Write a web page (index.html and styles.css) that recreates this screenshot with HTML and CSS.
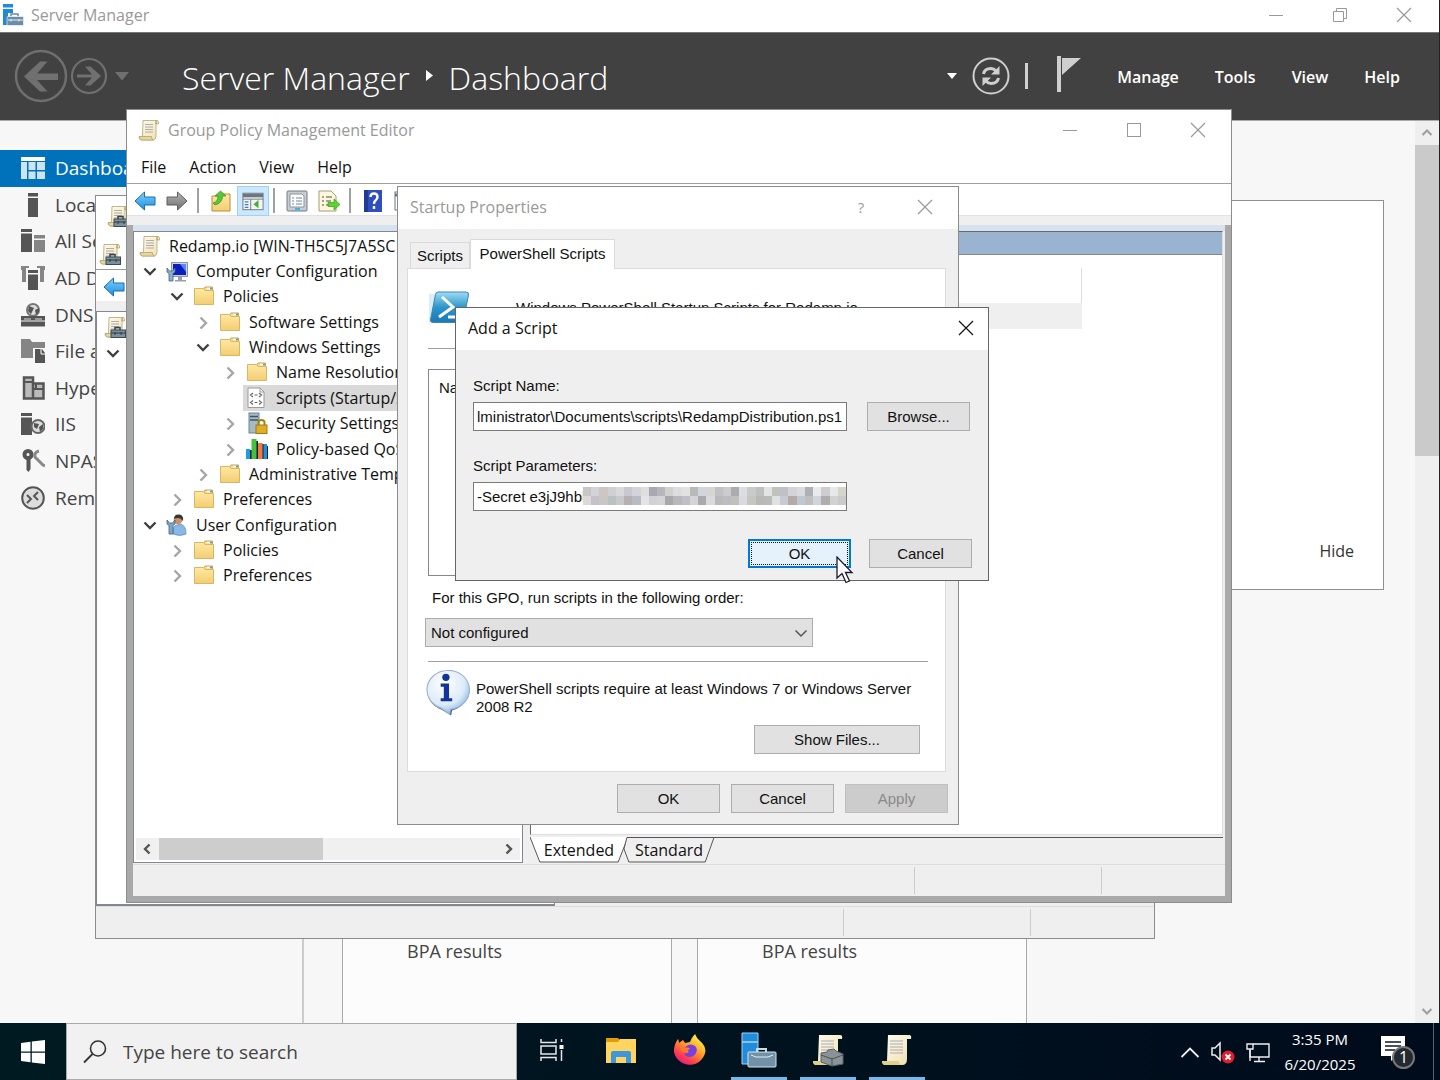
FILE: index.html
```html
<!DOCTYPE html>
<html lang="en">

<head>
    <meta charset="UTF-8">
    <meta name="viewport" content="width=device-width, initial-scale=1.0">
    <title>Server Manager</title>
    <link rel="stylesheet" href="styles.css">
</head>

<body>

    <!-- shared icons -->
    <svg class="sprite" aria-hidden="true">
        <defs>
            <linearGradient id="g-folder" x1="0" y1="0" x2="0" y2="1">
                <stop offset="0" stop-color="#ffe9a3" />
                <stop offset="1" stop-color="#f3cd73" />
            </linearGradient>
            <linearGradient id="g-paper" x1="0" y1="0" x2="1" y2="1">
                <stop offset="0" stop-color="#fffdf0" />
                <stop offset="1" stop-color="#efe0ae" />
            </linearGradient>
            <linearGradient id="g-blue" x1="0" y1="0" x2="0" y2="1">
                <stop offset="0" stop-color="#7fd0fb" />
                <stop offset="1" stop-color="#1b8fe0" />
            </linearGradient>
            <linearGradient id="g-grey" x1="0" y1="0" x2="0" y2="1">
                <stop offset="0" stop-color="#b5b5b5" />
                <stop offset="1" stop-color="#6f6f6f" />
            </linearGradient>
        </defs>
        <symbol id="i-scroll" viewBox="0 0 22 22">
            <path d="M5 1.500h14q2 .3 1.500 3.500h-2.500v12q-.3 3.500-2.500 4H3Q.8 20.500 1 17.500h3.500z" fill="url(#g-paper)" stroke="#b3a371" stroke-width=".8" />
            <path d="M18 5q-.5-3 1-3.500" fill="none" stroke="#8b7a45" />
            <path d="M1.500 17.500h12q-.3 3 2 3.500H3q-1.500-.5-1.500-3.500z" fill="#e8d79c" stroke="#b3a371" stroke-width=".8" />
            <path d="M7 5.500h8M7 8h8M7 10.500h8M7 13h8" stroke="#9c99a8" stroke-width=".8" />
        </symbol>
        <symbol id="i-scroll-box" viewBox="0 0 22 22">
            <use href="#i-scroll" />
            <path d="M11 14v-2.500h5V14" fill="none" stroke="#33424c" stroke-width="1.500" />
            <rect x="7" y="14" width="14.500" height="7.500" fill="#7d919d" stroke="#3c4b55" />
            <path d="M7 17h14.500M11 16v3M17 16v3" stroke="#2c3a43" />
        </symbol>
        <symbol id="i-folder" viewBox="0 0 22 22">
            <path d="M11 3.500l1-1.500h7.500v4H11z" fill="#f6dd96" stroke="#c9a14c" />
            <path d="M14 3.500h3" stroke="#fff" stroke-width="1.500" />
            <path d="M17 3.500h2" stroke="#4a9ae0" stroke-width="1.500" />
            <path d="M1.500 3.500h9l1.500 2h8.500v14h-19z" fill="url(#g-folder)" stroke="#d9b660" />
        </symbol>
        <symbol id="i-arrow" viewBox="0 0 22 20">
            <path d="M1 10L10.500 1v5H21v8H10.500v5z" fill="url(#g-blue)" stroke="#1c6bb0" />
        </symbol>
        <symbol id="i-down" viewBox="0 0 14 14">
            <path d="M1.500 4.500L7 10l5.500-5.500" fill="none" stroke="#404040" stroke-width="2.400" />
        </symbol>
        <symbol id="i-right" viewBox="0 0 14 14">
            <path d="M4.500 2.500L10 8l-5.500 5.500" fill="none" stroke="#a6a6a6" stroke-width="2.400" />
        </symbol>
        <symbol id="i-close" viewBox="0 0 16 16">
            <path d="M1 1l14 14M15 1L1 15" fill="none" stroke="currentColor" stroke-width="1.200" />
        </symbol>
        <symbol id="i-min" viewBox="0 0 16 16">
            <path d="M1 8.500h14" stroke="currentColor" />
        </symbol>
        <symbol id="i-max" viewBox="0 0 16 16">
            <rect x="1.500" y="1.500" width="13" height="13" fill="none" stroke="currentColor" />
        </symbol>
        <symbol id="i-toolbox" viewBox="0 0 22 22">
            <path d="M1 0h10v3.500H1zM1 5h10v4H6v12H1z" fill="#1f8ad6" />
            <path d="M9 12.500V10h7v2.500" fill="none" stroke="#6b8ba2" stroke-width="1.500" />
            <rect x="5" y="12.500" width="16.500" height="9" rx="1" fill="#6d8da6" stroke="#fff" stroke-width=".6" />
            <path d="M6 16h15M9 15v2.500M17 15v2.500" stroke="#e4edf3" />
        </symbol>
    </svg>

    <!-- Server Manager main window -->
    <main class="manager">
        <header class="titlebar">
            <svg class="icon"><use href="#i-toolbox" /></svg>
            <span class="title">Server Manager</span>
            <div class="win-buttons">
                <button type="button" aria-label="Minimize"><svg><use href="#i-min" /></svg></button>
                <button type="button" aria-label="Restore"><svg viewBox="0 0 16 16"><path d="M4.500 4.500v-3h10v10h-3M1.500 4.500h10v10h-10z" fill="none" stroke="currentColor" /></svg></button>
                <button type="button" aria-label="Close"><svg><use href="#i-close" /></svg></button>
            </div>
        </header>

        <div class="banner">
            <div class="nav-arrows">
                <svg width="54" height="54" viewBox="0 0 54 54"><circle cx="27" cy="27" r="25" fill="none" stroke="#6f6f6f" stroke-width="2.500" /><path d="M44 24.500H23l10.500-12h-7.500L10 27.500 26 42.500h7.500l-10.500-11.500H44z" fill="#707070" /></svg>
                <svg width="38" height="38" viewBox="0 0 38 38"><circle cx="19" cy="19" r="17" fill="none" stroke="#6f6f6f" stroke-width="2.200" /><path d="M7 17.500h15l-7-8h5.500L31 19 20.500 28.500H15l7-8H7z" fill="#707070" /></svg>
                <svg width="16" height="10" viewBox="0 0 16 10"><path d="M1 1h14L8 9.500z" fill="#707070" /></svg>
            </div>
            <h1 class="crumbs">Server Manager <svg width="7" height="11" viewBox="0 0 7 11"><path d="M0 0l7 5.500-7 5.500z" fill="#fff" /></svg> Dashboard</h1>
            <div class="banner-tools">
                <svg width="10" height="6" viewBox="0 0 10 6"><path d="M0 0h10L5 6z" fill="#fff" /></svg>
                <svg width="38" height="38" viewBox="0 0 38 38"><circle cx="19" cy="19" r="17.500" fill="none" stroke="#cfcfcf" stroke-width="2" /><path d="M11.500 17q1-5.500 7.500-5.500 3 0 5 2.500M26.500 21q-1 5.500-7.500 5.500-3 0-5-2.500" fill="none" stroke="#cfcfcf" stroke-width="3" /><path d="M27.500 9v8.500H19zM10.500 29v-8.500H19z" fill="#cfcfcf" /></svg>
                <i class="bar"></i>
                <svg class="flag" width="24" height="36" viewBox="0 0 24 36"><path d="M0 0h4v36H0zM5 2h19L5 19z" fill="#cfcfcf" /></svg>
            </div>
            <nav class="banner-menu">
                <button type="button">Manage</button>
                <button type="button">Tools</button>
                <button type="button">View</button>
                <button type="button">Help</button>
            </nav>
        </div>

        <div class="manager-body">
            <nav class="sidebar">
                <a class="side-item active" href="#"><svg viewBox="0 0 24 24"><path d="M0 1h24v4H0z" fill="#fff" /><path d="M0 6h6v17H0zM7.500 6h7v8h-7zM16 6h8v8h-8zM7.500 15.500h7V23h-7zM16 15.500h8V23h-8z" fill="#cbe4f4" /></svg>Dashboard</a>
                <a class="side-item" href="#"><svg viewBox="0 0 24 24"><path d="M7 0h10v3.500H7zM7 5h10v19H7z" /></svg>Local</a>
                <a class="side-item" href="#"><svg viewBox="0 0 24 24"><path d="M0 0h11v3H0zM0 4.500h11V23H0z" /><path d="M13 6h11v3.500H13zM13 11h11v12H13z" fill="#858585" /></svg>All Serv</a>
                <a class="side-item" href="#"><svg viewBox="0 0 24 24"><path d="M0 0h8v2H5v14H1V4H0zM24 0h-8v2h3v14h4V4h1z" fill="#858585" /><path d="M7 4h10v3H7zM7 8.500h10V24H7z" /></svg>AD DS</a>
                <a class="side-item" href="#"><svg viewBox="0 0 24 24"><circle cx="12" cy="7" r="6" fill="#ddd" stroke="#777" stroke-width="2" /><path d="M8 3l5 2-3 6-3-3zM14 7l4-2v4l-3 3z" /><path d="M0 13h24v4.500H0zM0 18.500h24v5H0z" /><path d="M3 16h7M14 16h7" stroke="#ddd" /></svg>DNS</a>
                <a class="side-item" href="#"><svg viewBox="0 0 24 24"><path d="M0 0h9l2 3h13v6H12v10H0z" fill="#858585" /><path d="M14 10h7l3 4v10H14z" /><path d="M20 10v5h4" fill="none" stroke="#fff" /></svg>File and</a>
                <a class="side-item" href="#"><svg viewBox="0 0 24 24"><path d="M3 1.500h9v21H3zM12 7.500h10.500v15H12z" fill="#bbb" stroke="#555" stroke-width="2.500" /><path d="M3 6h9M12 13h10M15 7v6" stroke="#555" stroke-width="2" /></svg>Hyper-V</a>
                <a class="side-item" href="#"><svg viewBox="0 0 24 24"><path d="M0 1h11v3H0zM0 5.500h11V23H0z" /><circle cx="17" cy="14.500" r="6.500" fill="#ddd" stroke="#666" stroke-width="2" /><path d="M13 11l5 1-2 5-3-2zM18 15l4-3v5l-3 3z" /></svg>IIS</a>
                <a class="side-item" href="#"><svg viewBox="0 0 24 24"><circle cx="7" cy="5.500" r="3.500" fill="none" stroke="#555" stroke-width="4" /><path d="M5.500 9h4v11l-2 3-2-2z" /><path d="M18 2q-5 1-4 6l8 8 2 1" fill="none" stroke="#888" stroke-width="3" /></svg>NPAS</a>
                <a class="side-item" href="#"><svg viewBox="0 0 24 24"><circle cx="12" cy="12" r="10.800" fill="#ddd" stroke="#555" stroke-width="2" /><path d="M6 9l4 4-4 4M17 6l-4 4 4 4" fill="none" stroke="#555" stroke-width="2" /></svg>Remote</a>
            </nav>
            <section class="dashboard">
                <div class="welcome"><button type="button">Hide</button></div>
                <div class="tiles">
                    <div class="tile">BPA results</div>
                    <div class="tile">BPA results</div>
                </div>
            </section>
            <div class="vscroll">
                <svg viewBox="0 0 14 14"><path d="M2.500 9L7 4.500 11.500 9" fill="none" stroke="#a0a0a0" stroke-width="2.200" /></svg>
                <div class="thumb"></div>
                <svg viewBox="0 0 14 14"><path d="M2.500 5L7 9.500 11.500 5" fill="none" stroke="#a0a0a0" stroke-width="2.200" /></svg>
            </div>
        </div>
    </main>

    <!-- Group Policy Management, behind the editor -->
    <div class="window gpm">
        <div class="gpm-title"><svg class="icon"><use href="#i-scroll-box" /></svg></div>
        <div class="gpm-menu"><svg class="icon"><use href="#i-scroll-box" /></svg></div>
        <div class="gpm-tools"><svg class="icon"><use href="#i-arrow" /></svg></div>
        <div class="gpm-tree">
            <svg class="icon"><use href="#i-scroll-box" /></svg>
            <svg class="chev"><use href="#i-down" /></svg>
        </div>
        <div class="statusbar"><span></span><span></span></div>
    </div>

    <!-- Group Policy Management Editor -->
    <div class="window editor">
        <header class="titlebar">
            <svg class="icon"><use href="#i-scroll" /></svg>
            <span class="title">Group Policy Management Editor</span>
            <div class="win-buttons">
                <button type="button" aria-label="Minimize"><svg><use href="#i-min" /></svg></button>
                <button type="button" aria-label="Maximize"><svg><use href="#i-max" /></svg></button>
                <button type="button" aria-label="Close"><svg><use href="#i-close" /></svg></button>
            </div>
        </header>
        <nav class="menubar">
            <button type="button">File</button>
            <button type="button">Action</button>
            <button type="button">View</button>
            <button type="button">Help</button>
        </nav>
        <div class="toolbar">
            <button type="button" aria-label="Back"><svg><use href="#i-arrow" /></svg></button>
            <button type="button" aria-label="Forward"><svg viewBox="0 0 22 20"><path d="M21 10L11.500 1v5H1v8h10.500v5z" fill="url(#g-grey)" stroke="#5d5d5d" /></svg></button>
            <i></i>
            <button type="button" aria-label="Up one level"><svg viewBox="0 0 22 22"><path d="M2 6h8l2-2h8v17H2z" fill="url(#g-folder)" stroke="#b98f3a" /><path d="M3 13q5-1 5-7H5l5.500-5L16 6h-3.500q0 7-7.500 9z" fill="#55c936" stroke="#2f8f1c" stroke-width=".7" /></svg></button>
            <button type="button" class="on" aria-label="Show tree"><svg viewBox="0 0 24 22"><rect x="1" y="2.500" width="22" height="18" fill="#f2f4f6" stroke="#6c7681" /><path d="M1 3h22v4H1z" fill="#6c7681" /><path d="M1 9h22M9.500 9v12" stroke="#6c7681" /><path d="M3 12h4M3 15h4M3 18h4" stroke="#3f7fc0" stroke-width="1.500" /><path d="M18 10v9l-5.500-4.500z" fill="#3fb52a" /></svg></button>
            <i></i>
            <button type="button" aria-label="Properties"><svg viewBox="0 0 22 22"><rect x="1" y="1" width="20" height="20" rx="1" fill="#c8cdd2" stroke="#737b84" /><path d="M4 4h12l2 2v11H4z" fill="#fff" stroke="#8b949d" /><path d="M6 8h2M10 8h6M6 11h2M10 11h6M6 14h2M10 14h6" stroke="#6d86a5" /><path d="M9 19h5" stroke="#35b9e6" stroke-width="2" /></svg></button>
            <button type="button" aria-label="Export list"><svg viewBox="0 0 22 22"><path d="M1 1h12l5 5v15H1z" fill="#fdf7dc" stroke="#a79d78" /><path d="M4 7h2M8 7h6M4 11h2M8 11h5M4 15h2M8 15h5" stroke="#8b8674" stroke-width="1.500" /><path d="M10 12.500h6V9l6 5.500-6 5.500v-3.500h-6z" fill="#5ed32f" stroke="#38992a" stroke-width=".7" /></svg></button>
            <i></i>
            <button type="button" aria-label="Help"><svg viewBox="0 0 22 22"><rect x="2" y="0" width="18" height="22" fill="#2f4fc1" /><path d="M2 0h4v22H2z" fill="#223a94" /><path d="M8.500 7q0-3.500 3.500-3.500T15.500 7q0 2-2 3.500-1.500 1-1.500 3.500M12 16v3" fill="none" stroke="#fff" stroke-width="2.400" /></svg></button>
            <button type="button" aria-label="Filter"><svg viewBox="0 0 22 22"><rect x="1" y="2" width="20" height="18" fill="#fff" stroke="#6c7681" /><path d="M1 5h20" stroke="#6c7681" stroke-width="3" /></svg></button>
        </div>
        <div class="editor-body">
            <div class="panes">
                <div class="tree-pane">
                    <ul class="tree">
                        <li class="root"><span class="node"><svg class="icon"><use href="#i-scroll" /></svg>Redamp.io [WIN-TH5C5J7A5SC</span></li>
                        <li class="lvl-1"><svg class="chev"><use href="#i-down" /></svg><span class="node"><svg class="icon" viewBox="0 0 22 22"><path d="M12 17h4v3h4v1.500H9V20h3z" fill="#9aa0a6" /><rect x="5.500" y="2.500" width="16" height="14" fill="#ccd2d8" stroke="#90979e" /><path d="M7 4h13v11H7z" fill="#0b1fbe" /><path d="M14 4h6v8z" fill="#4f8bff" /><path d="M1 8v4l2 1.500V21h4v-7.500L9 12V8l-2.500 3h-3z" fill="#89aecb" stroke="#3e6485" stroke-width=".8" /></svg>Computer Configuration</span></li>
                        <li class="lvl-2"><svg class="chev"><use href="#i-down" /></svg><span class="node"><svg class="icon"><use href="#i-folder" /></svg>Policies</span></li>
                        <li class="lvl-3"><svg class="chev"><use href="#i-right" /></svg><span class="node"><svg class="icon"><use href="#i-folder" /></svg>Software Settings</span></li>
                        <li class="lvl-3"><svg class="chev"><use href="#i-down" /></svg><span class="node"><svg class="icon"><use href="#i-folder" /></svg>Windows Settings</span></li>
                        <li class="lvl-4"><svg class="chev"><use href="#i-right" /></svg><span class="node"><svg class="icon"><use href="#i-folder" /></svg>Name Resolution</span></li>
                        <li class="lvl-4"><span class="chev"></span><span class="node selected"><svg class="icon" viewBox="0 0 22 22"><path d="M2 1h12l4 4v15.500H2z" fill="#fff" stroke="#9a9a9a" /><path d="M14 1v4h4" fill="none" stroke="#9a9a9a" /><path d="M7 6L4.500 8 7 10M13 6l2.500 2-2.500 2M8.500 8h3M7 13.500l-2.500 2 2.500 2M13 13.500l2.500 2-2.500 2M8.500 15.500h3" fill="none" stroke="#666" stroke-width="1.200" /></svg>Scripts (Startup/Sh</span></li>
                        <li class="lvl-4"><svg class="chev"><use href="#i-right" /></svg><span class="node"><svg class="icon" viewBox="0 0 22 22"><rect x="3" y="1" width="10" height="20" fill="#a6bac6" stroke="#6e8391" /><path d="M4 4.500h8M4 8h8" stroke="#3f5562" stroke-width="1.500" /><path d="M12.500 14v-3.500q0-2.500 3-2.500t3 2.500V14" fill="none" stroke="#a3830e" stroke-width="2" /><rect x="10" y="13" width="11" height="8.500" fill="#dfae25" stroke="#a3780e" /></svg>Security Settings</span></li>
                        <li class="lvl-4"><svg class="chev"><use href="#i-right" /></svg><span class="node"><svg class="icon" viewBox="0 0 22 22"><path d="M4 12h2v9H4zM10 3h2v18h-2zM16 6h2v15h-2zM21 8h1v13h-1z" fill="#12222d" /><path d="M0 11h4v10H0z" fill="#1d9be8" /><path d="M5.500 1h5v20h-5z" fill="#45bf3d" /><path d="M12 5h4.500v16H12z" fill="#f5754a" /><path d="M17.500 6h3.500v15h-3.500z" fill="#1d8fdc" /></svg>Policy-based QoS</span></li>
                        <li class="lvl-3"><svg class="chev"><use href="#i-right" /></svg><span class="node"><svg class="icon"><use href="#i-folder" /></svg>Administrative Temp</span></li>
                        <li class="lvl-2"><svg class="chev"><use href="#i-right" /></svg><span class="node"><svg class="icon"><use href="#i-folder" /></svg>Preferences</span></li>
                        <li class="lvl-1"><svg class="chev"><use href="#i-down" /></svg><span class="node"><svg class="icon" viewBox="0 0 22 22"><path d="M7 20q-1-8 4-9l4-1q5 2 5 10-6 3-13 0z" fill="#8ab8e6" stroke="#5a87b5" stroke-width=".7" /><circle cx="12" cy="6" r="4.300" fill="#c8946c" /><path d="M8 5q0-5 5-4.500T17 7q-2-3-5-3t-4 1z" fill="#3d3530" /><path d="M1 6v4l2 1.500V20h4v-8.500L9 10V6L6.500 9h-3z" fill="#7fa6c6" stroke="#3e6485" stroke-width=".8" /></svg>User Configuration</span></li>
                        <li class="lvl-2"><svg class="chev"><use href="#i-right" /></svg><span class="node"><svg class="icon"><use href="#i-folder" /></svg>Policies</span></li>
                        <li class="lvl-2"><svg class="chev"><use href="#i-right" /></svg><span class="node"><svg class="icon"><use href="#i-folder" /></svg>Preferences</span></li>
                    </ul>
                    <div class="hscroll">
                        <svg viewBox="0 0 14 14"><path d="M9 2.500L4.500 7 9 11.500" fill="none" stroke="#555" stroke-width="2.400" /></svg>
                        <div class="thumb"></div>
                        <svg viewBox="0 0 14 14"><path d="M5 2.500L9.500 7 5 11.500" fill="none" stroke="#555" stroke-width="2.400" /></svg>
                    </div>
                </div>
                <div class="detail-pane">
                    <div class="detail-view">
                        <div class="detail-head"></div>
                        <div class="detail-cols"></div>
                        <div class="detail-row"></div>
                    </div>
                    <div class="view-tabs">
                        <button type="button" class="view-tab current"><svg viewBox="0 0 100 26" preserveAspectRatio="none"><path d="M0 0l10 25h80L100 0" fill="#fff" stroke="#555" /></svg><span>Extended</span></button>
                        <button type="button" class="view-tab"><svg viewBox="0 0 94 26" preserveAspectRatio="none"><path d="M4 .5L1 12l5 13h78L93 .5z" fill="#efefef" stroke="#555" /></svg><span>Standard</span></button>
                    </div>
                </div>
            </div>
            <div class="statusbar"><span></span><span></span></div>
        </div>
    </div>

    <!-- Startup Properties -->
    <div class="window startup">
        <header class="titlebar">
            <span class="title">Startup Properties</span>
            <div class="win-buttons">
                <button type="button" aria-label="Help">?</button>
                <button type="button" aria-label="Close"><svg><use href="#i-close" /></svg></button>
            </div>
        </header>
        <div class="startup-body">
            <div class="tabs">
                <button type="button">Scripts</button>
                <button type="button" class="current">PowerShell Scripts</button>
            </div>
            <div class="page">
                <div class="page-head">
                    <svg width="42" height="36" viewBox="0 0 42 36"><defs><linearGradient id="g-ps" x1="0" y1="0" x2="0" y2="1"><stop offset="0" stop-color="#9edcf3" /><stop offset=".5" stop-color="#2d96cb" /><stop offset="1" stop-color="#1b78b8" /></linearGradient></defs><path d="M1 4h10L6 32H1z" fill="#d9eef8" /><path d="M10 2h28q3 0 2.500 3l-5 25q-.5 2.500-3 2.500H5q-3 0-2.500-3l5-25Q8 2 10 2z" fill="url(#g-ps)" stroke="#3c88ad" /><path d="M14 7l11 10-14 10" fill="none" stroke="#fff" stroke-width="3" /><path d="M20 27h9" stroke="#fff" stroke-width="3" /></svg>
                    <span>Windows PowerShell Startup Scripts for Redamp.io</span>
                </div>
                <hr>
                <div class="listbox">Name</div>
                <label class="order-label" for="order">For this GPO, run scripts in the following order:</label>
                <div class="select-wrap">
                    <select id="order">
                        <option>Not configured</option>
                    </select>
                    <svg viewBox="0 0 14 14"><path d="M1.500 4.500L7 10l5.500-5.500" fill="none" stroke="#555" stroke-width="1.500" /></svg>
                </div>
                <hr>
                <div class="notice">
                    <svg width="46" height="46" viewBox="4 1 44 44"><defs><radialGradient id="g-info" cx=".4" cy=".3" r=".8"><stop offset="0" stop-color="#fff" /><stop offset=".6" stop-color="#dcebfa" /><stop offset="1" stop-color="#6d9fd6" /></radialGradient></defs><path d="M26 2a20 19 0 0 1 4 37.500l-1 5-9-5.500A20 19 0 0 1 26 2z" fill="#4c6488" /><path d="M24.500 1.500a20 18.500 0 0 1 4 37l-1 5-8-6A20 18.500 0 0 1 24.500 1.500z" fill="url(#g-info)" stroke="#9bb0cc" /><circle cx="24" cy="8" r="3.500" fill="#12339b" /><path d="M19 14h8v14h3v3H19v-3h3V17h-3z" fill="#12339b" /></svg>
                    <p>PowerShell scripts require at least Windows 7 or Windows Server 2008 R2</p>
                </div>
                <button type="button" class="btn show-files">Show Files...</button>
            </div>
            <div class="actions">
                <button type="button" class="btn">OK</button>
                <button type="button" class="btn">Cancel</button>
                <button type="button" class="btn" disabled>Apply</button>
            </div>
        </div>
    </div>

    <!-- Add a Script -->
    <div class="window dialog">
        <header class="titlebar">
            <span class="title">Add a Script</span>
            <div class="win-buttons">
                <button type="button" aria-label="Close"><svg><use href="#i-close" /></svg></button>
            </div>
        </header>
        <form class="dialog-body">
            <label for="script-name">Script Name:</label>
            <div class="field">
                <input id="script-name" type="text" value="lministrator\Documents\scripts\RedampDistribution.ps1">
                <button type="button" class="btn">Browse...</button>
            </div>
            <label for="script-params">Script Parameters:</label>
            <div class="field">
                <div class="secret">
                    <input id="script-params" type="text" value="-Secret e3jJ9hbl">
                    <svg id="mosaic" viewBox="0 0 32 2" preserveAspectRatio="none" shape-rendering="crispEdges"></svg>
                </div>
            </div>
            <div class="actions">
                <button type="button" class="btn default">OK</button>
                <button type="button" class="btn">Cancel</button>
            </div>
        </form>
    </div>

    <svg class="cursor" viewBox="0 0 18 28"><path d="M1 1v21l5-4.500 4 9 3.500-1.500-4-8.500H16z" fill="#fff" stroke="#1b1b2b" stroke-width="1.300" /></svg>

    <!-- taskbar -->
    <footer class="taskbar">
        <button type="button" class="start" aria-label="Start"><svg width="24" height="24" viewBox="0 0 24 24"><path d="M0 3l9.500-1.300v9.800H0zM10.800 1.500L24 0v11.500H10.800zM0 12.700h9.500v9.600L0 21zM10.800 12.700H24V24l-13.200-1.600z" fill="#fff" /></svg></button>
        <label class="search">
            <svg width="24" height="24" viewBox="0 0 24 24"><circle cx="15" cy="8.500" r="7.500" fill="none" stroke="#333" stroke-width="1.600" /><path d="M9.500 14L1 22.500" stroke="#333" stroke-width="1.800" /></svg>
            <input type="text" placeholder="Type here to search">
        </label>
        <div class="apps">
            <button type="button" aria-label="Task View"><svg width="24" height="24" viewBox="0 0 24 24"><path d="M1 1v3.500h15V1M1 23v-3.500h15V23M1 8h15v8H1zM21.500 1v3M21.500 12v11" fill="none" stroke="#e6e6e6" stroke-width="1.500" /><path d="M19.500 7h4v4h-4z" fill="#fff" /></svg></button>
            <button type="button" aria-label="File Explorer"><svg width="32" height="28" viewBox="0 0 32 28"><path d="M1 2h12l2 2v4H1z" fill="#e39b08" /><path d="M1 6h12l2-3h16v24H1z" fill="#ffd45f" /><path d="M6 27V17q0-2 2-2h16q2 0 2 2v10h-5v-6h-10v6z" fill="#3c97dd" /></svg></button>
            <button type="button" aria-label="Firefox"><svg width="34" height="34" viewBox="0 0 34 34"><defs><linearGradient id="g-fox" x1=".8" y1=".1" x2=".2" y2="1"><stop offset="0" stop-color="#fff04a" /><stop offset=".4" stop-color="#ff9a2a" /><stop offset=".75" stop-color="#ff3a50" /><stop offset="1" stop-color="#e0158f" /></linearGradient></defs><path d="M22 1q2 5 5 7 5 4 5.500 10A16 16 0 0 1 1 19Q.5 12 5 6l1 4 4-3 2 3 5-1q2-5 5-8z" fill="url(#g-fox)" /><path d="M11 15q6-6 11-2 3 3 1 7t-7 4q-4 0-5-4 3 1 5-1z" fill="#7a3fe0" /><path d="M5 6q-1 8 5 8l7 1-3 4q-5 1-6-3z" fill="#ff7a2a" /></svg></button>
            <button type="button" class="open" aria-label="Server Manager"><svg width="36" height="36" viewBox="0 0 36 36"><path d="M1 1h16v9H1zM1 10h16v22H1z" fill="#1f8ddc" stroke="#a6d4f2" /><path d="M16 20v-3h9v3" fill="none" stroke="#c9dbe6" stroke-width="2" /><rect x="7" y="20" width="28" height="15" rx="1" fill="#7191a8" stroke="#d6e3eb" /><path d="M10 23l5 2h12l5-2" fill="none" stroke="#e6eef3" /></svg></button>
            <button type="button" class="open" aria-label="Group Policy Management"><svg width="34" height="34" viewBox="0 0 34 34"><path d="M8 2h21q3 0 2 4h-4v20q0 6-5 6H5q-3-1-3-4h5z" fill="url(#g-paper)" /><path d="M2 28h17q0 4 3 4H5q-3 0-3-4z" fill="#e2cf8a" /><path d="M10 8h13M10 11h13M10 14h13M10 17h13" stroke="#aaa8b6" /><path d="M16 19l1-2 6-1 2 2 7 3v10l-11 2-11-4V20z" fill="#8b9298" stroke="#596066" /><path d="M10 22l11 4 11-4M21 25v8" fill="none" stroke="#4a5157" /></svg></button>
            <button type="button" class="open" aria-label="Group Policy Management Editor"><svg width="34" height="34" viewBox="0 0 34 34"><path d="M8 2h21q3 0 2 4h-4v20q0 6-5 6H5q-3-1-3-4h5z" fill="url(#g-paper)" /><path d="M2 28h17q0 4 3 4H5q-3 0-3-4z" fill="#e2cf8a" /><path d="M10 8h13M10 11h13M10 14h13M10 17h13M10 20h13" stroke="#aaa8b6" /></svg></button>
        </div>
        <div class="tray">
            <svg width="20" height="12" viewBox="0 0 20 12"><path d="M1.500 11L10 2.500l8.500 8.500" fill="none" stroke="#eee" stroke-width="1.800" /></svg>
            <svg width="24" height="24" viewBox="0 0 24 24"><path d="M1 8h3l5-5v17l-5-5H1z" fill="none" stroke="#eee" stroke-width="1.500" /><circle cx="17" cy="17" r="6.500" fill="#df1f2d" /><path d="M14.500 14.500l5 5M19.500 14.500l-5 5" stroke="#fff" stroke-width="1.800" /></svg>
            <svg width="24" height="22" viewBox="0 0 24 22"><path d="M7 3h16v13H4V9M13 16v4M8 20.500h11" fill="none" stroke="#eee" stroke-width="1.400" /><path d="M1 3h6v5H1zM4 8v12" fill="none" stroke="#eee" stroke-width="1.400" /></svg>
            <div class="clock"><span>3:35 PM</span><span>6/20/2025</span></div>
            <div class="notes">
                <svg width="24" height="26" viewBox="0 0 24 26"><path d="M0 0h24v20h-9l-5 5v-5H0z" fill="#fff" /><path d="M4 6h16M4 10h16M4 14h10" stroke="#0a1722" stroke-width="1.500" /></svg>
                <span class="badge">1</span>
            </div>
        </div>
    </footer>

    <script>
        // blocks that hide the rest of the secret
        var rows = [
            ['c6c6ca', 'd3d3d5', 'cdc6c5', 'cfd0d3', 'd9d9d9', 'c8c8d0', 'd3d3d9', 'dededb', 'a9a8b0', 'b7b6bc', 'd0d0d0', 'dcdde0', 'e2e2e0', 'b9b9b9', 'd0d6da', 'd5d5d2', 'c0c0c5', 'cbccd2', 'acacae', 'dbdde2', 'c8cbc8', 'bcc0c0', 'e2e4e4', 'c0c2be', 'c1bfc7', 'd3d3d8', 'd9dcda', 'adb0b6', 'e6ebee', 'cfcccf', 'e5eae8', 'd6d4cd'],
            ['dadada', 'c4c2c8', 'cac6c6', 'bbc0c5', 'c8c9ca', 'b6b0b3', 'babac4', 'e3e4e3', 'd2d2d6', 'd4d4d8', 'a8a8ac', 'b9b9bb', 'bfbfc9', 'd5d5d7', 'a9aaae', 'dadadc', 'b9b9b9', 'bdbdc1', 'c2bfbc', 'd9d9df', 'c6c6c1', 'b9b8b5', 'bababc', 'e0e1e1', 'c8cad2', 'b5aaa5', 'bfc8d0', 'bfbfbd', 'd2d4db', 'b1acae', 'd2d2d2', 'c9cac9']
        ];
        var mosaic = document.querySelector('#mosaic');
        rows.forEach(function (row, y) {
            row.forEach(function (color, x) {
                mosaic.innerHTML += `<rect x="${x}" y="${y}" width="1" height="1" fill="#${color}" />`;
            });
        });
    </script>

</body>

</html>
```
FILE: styles.css
```css
* {
    box-sizing: border-box;
}

body {
    margin: 0;
    height: 100vh;
    display: flex;
    flex-direction: column;
    overflow: hidden;
    position: relative;
    font-family: "Open Sans", "Noto Sans", sans-serif;
    font-size: 16px;
    color: #111;
    background-color: #f7f7f7;
}

button,
input,
select {
    font: inherit;
    color: inherit;
    margin: 0;
}

button {
    padding: 0;
    border: 0;
    background: none;
    white-space: nowrap;
}

svg {
    display: block;
    flex: none;
}

.sprite {
    position: absolute;
    width: 0;
    height: 0;
}

.icon {
    width: 22px;
    height: 22px;
}

.chev {
    width: 22px;
    height: 14px;
    flex: none;
}

/* title bars */
.titlebar {
    display: flex;
    align-items: center;
    flex: none;
    padding-bottom: 2px;
    background-color: #fff;
    color: #999;
}

.title {
    flex: 1;
    white-space: nowrap;
}

.win-buttons {
    display: flex;
    align-items: center;
    gap: 48px;
}

.win-buttons button {
    min-width: 16px;
}

.win-buttons svg {
    width: 16px;
    height: 16px;
}

/* server manager */
.manager {
    flex: 1;
    min-height: 0;
    display: flex;
    flex-direction: column;
    border-right: 1px solid #222;
}

.manager > .titlebar {
    height: 33px;
    padding: 0 27px 3px 2px;
    gap: 7px;
    border-bottom: 1px solid #777;
}

.banner {
    display: flex;
    align-items: center;
    flex: none;
    height: 87px;
    padding: 0 39px 2px 14px;
    background-color: #414141;
    color: #fff;
}

.nav-arrows {
    display: flex;
    align-items: center;
    gap: 2px;
    width: 168px;
}

.nav-arrows svg:last-child {
    margin-left: 4px;
}

.crumbs {
    flex: 1;
    display: flex;
    align-items: center;
    gap: 16px;
    margin: 0;
    padding-top: 4px;
    font-size: 32px;
    font-weight: 300;
    white-space: nowrap;
}

.crumbs svg {
    margin-bottom: 4px;
}

.banner-tools {
    display: flex;
    align-items: center;
    gap: 15px;
    margin-right: 36px;
}

.banner-tools .bar {
    width: 3px;
    height: 26px;
    background-color: #cfcfcf;
}

.banner-tools .flag {
    margin: 0 0 4px 14px;
}

.banner-menu {
    display: flex;
    gap: 36px;
    padding-top: 2px;
    font-weight: 600;
}

.manager-body {
    flex: 1;
    min-height: 0;
    display: flex;
    border-top: 1px solid #aaa;
}

.sidebar {
    display: grid;
    grid-auto-rows: 1fr;
    align-self: stretch;
    width: 304px;
    padding: 29px 0 507px;
    border-right: 2px solid #ccc;
}

.side-item {
    display: flex;
    align-items: center;
    gap: 10px;
    padding-left: 21px;
    font-size: 19px;
    color: #444;
    text-decoration: none;
    white-space: nowrap;
}

.side-item svg {
    width: 24px;
    height: 24px;
    fill: #555;
}

.side-item.active {
    background-color: #0072bc;
    color: #fff;
}

.dashboard {
    flex: 1;
    display: flex;
    flex-direction: column;
    overflow: hidden;
    padding: 79px 31px 0 38px;
}

.welcome {
    display: flex;
    justify-content: flex-end;
    align-items: flex-end;
    flex: none;
    height: 390px;
    padding: 0 29px 27px;
    border: 1px solid #8f8f8f;
    background-color: #fff;
    color: #333;
}

.tiles {
    flex: 1;
    display: grid;
    grid-template-columns: 330px 330px;
    gap: 25px;
    padding-top: 330px;
}

.tile {
    padding: 18px 64px;
    border: 1px solid #aaa;
    border-bottom: 0;
    background-color: #fcfcfc;
    font-size: 18px;
    color: #444;
}

.vscroll {
    display: flex;
    flex-direction: column;
    width: 24px;
    background-color: #efefef;
}

.vscroll svg {
    width: 24px;
    height: 14px;
    margin: 5px 0;
}

.vscroll .thumb {
    height: 311px;
    margin-bottom: auto;
    background-color: #cacaca;
}

/* floating windows */
.window {
    position: absolute;
    display: flex;
    flex-direction: column;
    border: 1px solid #8c8c8c;
    background-color: #efefef;
}

.statusbar {
    display: flex;
    justify-content: flex-end;
    flex: none;
    height: 32px;
    padding: 2px 0;
    border-top: 1px solid #ddd;
}

.statusbar span {
    border-left: 1px solid #ccc;
    width: 187px;
}

.statusbar span:last-child {
    width: 124px;
}

.gpm {
    left: 95px;
    top: 195px;
    width: 1060px;
    height: 744px;
}

.gpm-title,
.gpm-menu,
.gpm-tools {
    background-color: #fff;
    flex: none;
}

.gpm-title {
    height: 44px;
    padding: 9px 11px;
}

.gpm-menu {
    height: 30px;
    padding: 3px;
    border-bottom: 1px solid #999;
}

.gpm-tools {
    height: 31px;
    padding: 6px 7px;
}

.gpm-tree {
    flex: 1;
    width: 459px;
    margin-top: 10px;
    padding: 4px 7px;
    border: 1px solid #828790;
    border-width: 1px 1px 2px;
    background-color: #fff;
}

.gpm-tree .chev {
    margin-top: 8px;
    margin-left: -2px;
}

.editor {
    left: 126px;
    top: 109px;
    width: 1106px;
    height: 794px;
}

.editor > .titlebar {
    height: 42px;
    padding: 0 25px 2px 11px;
    gap: 8px;
}

.menubar {
    display: flex;
    gap: 23px;
    flex: none;
    height: 32px;
    padding: 0 14px 2px;
    border-bottom: 1px solid #a0a0a0;
    background-color: #fff;
}

.toolbar {
    display: flex;
    align-items: center;
    gap: 10px;
    flex: none;
    height: 32px;
    padding: 2px 7px 0;
    border-bottom: 1px solid #e2e2e2;
    background-color: #fff;
}

.toolbar svg {
    width: 22px;
    height: 22px;
}

.toolbar i {
    width: 2px;
    height: 25px;
    margin: 0 1px 0 -1px;
    background-color: #a0a0a0;
}

.toolbar .on {
    padding: 3px 4px;
    margin: 0 -5px;
    border: 1px solid #99d1ff;
    background-color: #cce8ff;
}

.editor-body {
    flex: 1;
    min-height: 0;
    display: flex;
    flex-direction: column;
    margin-top: 9px;
    border: 6px solid #a9a9a9;
    border-top: 0;
}

.panes {
    flex: 1;
    min-height: 0;
    display: flex;
    gap: 7px;
    padding: 0 2px 1px 0;
    border-top: 6px solid #d6e3ef;
}

.tree-pane {
    display: flex;
    flex-direction: column;
    width: 390px;
    border: 1px solid #828790;
    background-color: #fff;
}

.tree {
    list-style: none;
    display: grid;
    grid-auto-rows: 1fr;
    height: 355px;
    margin: 1px 0 auto;
    padding: 0;
    overflow: hidden;
}

.tree li,
.node {
    display: flex;
    align-items: center;
    white-space: nowrap;
}

.tree li {
    gap: 2px;
}

.node {
    gap: 8px;
    height: 100%;
    padding: 0 3px;
}

.node.selected {
    background-color: #d9d9d9;
}

.root {
    padding-left: 2px;
}

.lvl-1 {
    padding-left: 5px;
}

.lvl-2 {
    padding-left: 32px;
}

.lvl-3 {
    padding-left: 58px;
}

.lvl-4 {
    padding-left: 85px;
}

.hscroll {
    display: flex;
    align-items: center;
    height: 22px;
    margin: 0 2px 2px;
    background-color: #f0f0f0;
}

.hscroll svg {
    width: 23px;
    height: 14px;
}

.hscroll .thumb {
    width: 164px;
    height: 22px;
    margin-right: auto;
    background-color: #cdcdcd;
}

.detail-pane {
    flex: 1;
    display: flex;
    flex-direction: column;
}

.detail-view {
    flex: 1;
    border: 1px solid #696969;
    border-right-color: #ddd;
    border-bottom-color: #ddd;
    background-color: #fff;
}

.detail-head {
    height: 23px;
    border-bottom: 1px solid #888;
    background-color: #9ab3d1;
}

.detail-cols {
    width: 551px;
    height: 35px;
    margin-top: 13px;
    border-right: 1px solid #ddd;
}

.detail-row {
    width: 551px;
    height: 26px;
    background-color: #efefef;
}

.view-tabs {
    display: flex;
    height: 28px;
    padding-top: 2px;
    background: linear-gradient(#555, #555) 96px 2px / 100% 1px no-repeat;
}

.view-tab {
    display: grid;
    place-items: center;
}

.view-tab > * {
    grid-area: 1 / 1;
}

.view-tab svg {
    width: 92px;
    height: 26px;
}

.view-tab.current svg {
    width: 98px;
}

.view-tab + .view-tab {
    margin-left: -5px;
}

/* startup properties */
.startup,
.dialog {
    font-family: "Liberation Sans", Arial, sans-serif;
    font-size: 15px;
}

.startup .titlebar,
.dialog .titlebar {
    height: 42px;
    padding-left: 12px;
    font-family: "Open Sans", "Noto Sans", sans-serif;
}

.startup .title,
.dialog .title {
    font-size: 16px;
}

.startup {
    left: 397px;
    top: 186px;
    width: 562px;
    height: 639px;
}

.startup .titlebar {
    padding-right: 25px;
}

.startup-body {
    flex: 1;
    display: flex;
    flex-direction: column;
    padding: 10px 10px 11px 9px;
}

.tabs {
    display: flex;
    align-items: flex-end;
    height: 30px;
    margin-bottom: -1px;
    padding-left: 3px;
    position: relative;
}

.tabs button {
    width: 60px;
    height: 27px;
    border: 1px solid #dadada;
}

.tabs .current {
    width: 145px;
    height: 30px;
    padding-bottom: 2px;
    border-bottom: 0;
    background-color: #fff;
}

.page {
    flex: 1;
    display: flex;
    flex-direction: column;
    margin-right: 2px;
    padding: 21px 17px 17px;
    border: 1px solid #dcdcdc;
    background-color: #fff;
}

.page hr {
    width: 500px;
    height: 1px;
    margin: 0 0 0 3px;
    border: 0;
    flex: none;
    background-color: #a0a0a0;
}

.page-head {
    display: flex;
    gap: 46px;
    height: 58px;
    padding-left: 3px;
    line-height: 36px;
}

.listbox {
    width: 500px;
    height: 207px;
    margin: 20px 0 0 3px;
    padding: 9px 10px;
    border: 1px solid #828790;
}

.order-label {
    margin: 12px 0 0 7px;
    line-height: 20px;
}

.select-wrap {
    display: grid;
    align-items: center;
    width: 388px;
    margin: 10px 0 14px;
}

.select-wrap > * {
    grid-area: 1 / 1;
}

.select-wrap select {
    appearance: none;
    height: 29px;
    padding: 0 5px;
    border: 1px solid #adadad;
    border-radius: 0;
    background-color: #e1e1e1;
}

.select-wrap svg {
    justify-self: end;
    width: 14px;
    height: 14px;
    margin-right: 5px;
    pointer-events: none;
}

.notice {
    display: flex;
    gap: 5px;
    padding-top: 8px;
}

.notice p {
    flex: 1;
    margin: 10px 0 0;
    line-height: 18px;
}

.btn {
    width: 103px;
    height: 29px;
    border: 1px solid #adadad;
    background-color: #e1e1e1;
}

.btn:disabled {
    border-color: #bfbfbf;
    background-color: #cccccc;
    color: #8a8a8a;
}

.show-files {
    align-self: flex-end;
    width: 166px;
    margin: auto 8px 0 0;
}

.actions {
    display: flex;
    justify-content: flex-end;
    gap: 11px;
}

.startup-body > .actions {
    padding-top: 12px;
}

/* add a script */
.dialog {
    left: 455px;
    top: 307px;
    width: 534px;
    height: 274px;
    border-color: #666;
}

.dialog .titlebar {
    padding-right: 14px;
    color: #111;
}

.dialog-body {
    flex: 1;
    padding: 26px 16px 0 17px;
}

.dialog-body label {
    display: block;
    line-height: 20px;
}

.field {
    display: flex;
    gap: 20px;
    margin: 6px 0 25px;
}

.dialog-body input {
    width: 374px;
    height: 29px;
    padding: 0 3px;
    border: 1px solid #7a7a7a;
    background-color: #fff;
}

.secret {
    position: relative;
}

/* covers the tail of the value */
.secret svg {
    position: absolute;
    left: 110px;
    top: 5px;
    width: 263px;
    height: 18px;
}

.dialog .actions {
    gap: 18px;
    margin-top: 28px;
}

.btn.default {
    border: 2px solid #0078d7;
    background-color: #e5f1fb;
    outline: 1px dotted #111;
    outline-offset: -4px;
}

.cursor {
    position: absolute;
    left: 836px;
    top: 556px;
    width: 18px;
    height: 28px;
}

/* taskbar */
.taskbar {
    display: flex;
    flex: none;
    height: 57px;
    background: linear-gradient(90deg, #001a22, #000b1b);
    color: #fff;
}

.start {
    display: grid;
    place-items: center;
    width: 66px;
}

.search {
    display: flex;
    align-items: center;
    gap: 16px;
    width: 451px;
    padding-left: 16px;
    border: 1px solid #aaa;
    background-color: #f1f1f1;
}

.search input {
    flex: 1;
    border: 0;
    outline: 0;
    padding: 0;
    background: none;
    font-size: 19px;
}

.search input::placeholder {
    color: #444;
    opacity: 1;
}

.apps {
    flex: 1;
    display: flex;
    gap: 13px;
    padding-left: 7px;
}

.apps button {
    display: grid;
    place-items: center;
    width: 56px;
    border-bottom: 3px solid transparent;
}

.apps .open {
    border-bottom-color: #76b9ed;
}

.tray {
    display: flex;
    align-items: center;
    gap: 11px;
    margin-right: 6px;
    padding-right: 18px;
    border-right: 1px solid #55606a;
}

.clock {
    display: flex;
    flex-direction: column;
    text-align: center;
    width: 78px;
    margin-right: 11px;
    font-size: 15px;
    line-height: 25px;
}

.notes {
    position: relative;
    width: 34px;
    height: 32px;
}

.badge {
    position: absolute;
    right: 0;
    top: 10px;
    width: 23px;
    height: 23px;
    border: 2px solid #777;
    border-radius: 50%;
    background-color: #222a30;
    line-height: 19px;
    text-align: center;
}
```
